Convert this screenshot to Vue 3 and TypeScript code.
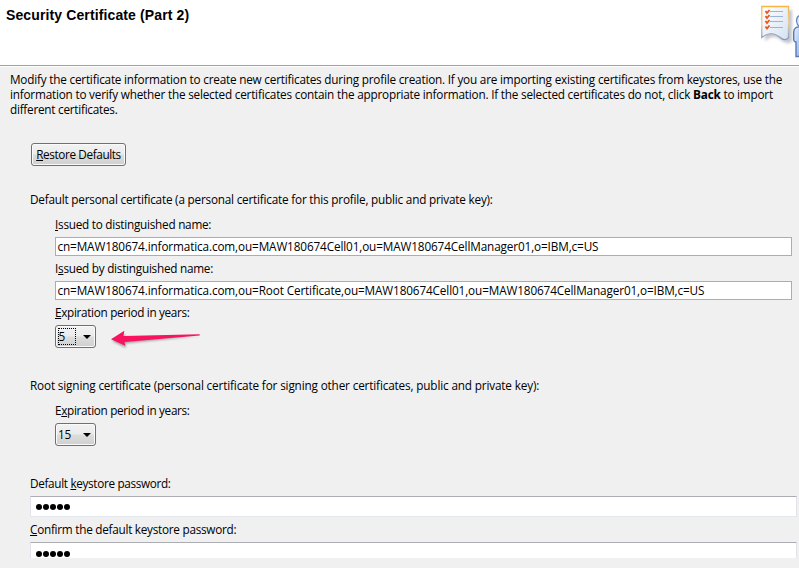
<script setup lang="ts">
import { ref } from 'vue'

interface CertificateName {
  before: string
  key: string
  after: string
  value: string
  size: string
}

const names: CertificateName[] = [
  {
    before: '',
    key: 'I',
    after: 'ssued to distinguished name:',
    value: 'cn=MAW180674.informatica.com,ou=MAW180674Cell01,ou=MAW180674CellManager01,o=IBM,c=US',
    size: 'to',
  },
  {
    before: 'I',
    key: 's',
    after: 'sued by distinguished name:',
    value: 'cn=MAW180674.informatica.com,ou=Root Certificate,ou=MAW180674Cell01,ou=MAW180674CellManager01,o=IBM,c=US',
    size: 'by',
  },
]
const personalYears = ref(5)
const rootYears = ref(15)
const passwordLength = 5
</script>

<template>
  <main class="wizard">
    <header class="banner">
      <h1>Security Certificate (Part 2)</h1>
      <svg class="art" width="60" height="65" viewBox="0 0 60 65">
        <defs>
          <linearGradient id="paper" x1="0" y1="0" x2="1" y2="1">
            <stop offset="0" stop-color="#ffffff" />
            <stop offset="1" stop-color="#d5e2f2" />
          </linearGradient>
          <linearGradient id="edge" x1="0" y1="0" x2="0" y2="1">
            <stop offset="0" stop-color="#f5b645" />
            <stop offset=".5" stop-color="#e8cf9f" />
            <stop offset="1" stop-color="#7d9cc9" />
          </linearGradient>
          <linearGradient id="person" x1="0" y1="0" x2="1" y2="1">
            <stop offset="0" stop-color="#e9f3ff" />
            <stop offset="1" stop-color="#86b2e6" />
          </linearGradient>
          <filter id="soft" x="-30%" y="-30%" width="160%" height="160%">
            <feGaussianBlur stdDeviation="1.8" />
          </filter>
        </defs>
        <path d="M26 10H53V42Q47 45 42 40Q35 33 26 41Z" fill="#8c8c94" opacity=".5" filter="url(#soft)" />
        <path d="M22.8 6.5H49.5V37.5Q46 42 40.5 37Q32 30 22.8 37.5Z" fill="url(#paper)" stroke="url(#edge)" stroke-width="1.3" />
        <g stroke="#9bb4d6" stroke-width="1">
          <path d="M31 11.5H44M31 16.5H44M31 21.5H44M31 27.5H44" />
        </g>
        <g fill="none" stroke="#e8571d" stroke-width="1.8">
          <path d="M26.500 11L28 13L30.500 10M26.500 16L28 18L30.500 15M26.500 21L28 23L30.500 20M26.500 26.500L28 28.500L30.500 25.500" />
        </g>
        <path d="M62 27Q55 26 54.700 32V40Q55 42 57 42V56.500H62Z" fill="url(#person)" stroke="#5879b4" stroke-width="1.4" />
        <path d="M62 15Q57.500 16 57.500 21Q58 26 62 27Z" fill="#dcecff" stroke="#6685bb" stroke-width="1.3" />
      </svg>
    </header>

    <section class="body">
      <p class="intro">
        <span class="i1">Modify the certificate information to create new certificates during profile creation. If you are importing existing certificates from keystores, use the</span>
        <span class="i2">information to verify whether the selected certificates contain the appropriate information. If the selected certificates do not, click <b>Back</b> to import</span>
        <span class="i3">different certificates.</span>
      </p>

      <button class="restore" type="button"><span><u>R</u>estore Defaults</span></button>

      <div class="group personal">
        <h2 class="t-personal">Default personal certificate (a personal certificate for this profile, public and private key):</h2>
        <div class="fields">
          <template v-for="n in names" :key="n.size">
            <label :class="'l-' + n.size">{{ n.before }}<u>{{ n.key }}</u>{{ n.after }}</label>
            <div class="input"><span :class="'v-' + n.size">{{ n.value }}</span></div>
          </template>
          <label class="l-exp"><u>E</u>xpiration period in years:</label>
          <div class="choice">
            <div class="combo focused">
              <span class="num">{{ personalYears }}</span>
              <svg class="caret" width="8" height="4" viewBox="0 0 8 4"><path d="M0 0H8L4 4Z" /></svg>
            </div>
            <svg class="arrow" width="100" height="28" viewBox="0 0 100 28">
              <path class="shade" d="M5 16L18 9L17.500 13.500L93 11L18.500 18.500L19 23Z" />
              <path class="pointer" d="M4 14.200L17.300 5.700L16.500 11L92.700 9.300V10.600L17.500 17L18.300 20.700Z" />
            </svg>
          </div>
        </div>
      </div>

      <div class="group root">
        <h2 class="t-root">Root signing certificate (personal certificate for signing other certificates, public and private key):</h2>
        <div class="fields">
          <label class="l-exp">E<u>x</u>piration period in years:</label>
          <div class="combo">
            <span class="num">{{ rootYears }}</span>
            <svg class="caret" width="8" height="4" viewBox="0 0 8 4"><path d="M0 0H8L4 4Z" /></svg>
          </div>
        </div>
      </div>

      <div class="group keystore">
        <label class="l-key">Default <u>k</u>eystore password:</label>
        <div class="password"><i v-for="d in passwordLength" :key="d"></i></div>
        <label class="l-conf"><u>C</u>onfirm the default keystore password:</label>
        <div class="password cut"><i v-for="d in passwordLength" :key="d"></i></div>
      </div>
    </section>
  </main>
</template>

<style>
body { margin: 0; background: #f0f0f0; }
</style>

<style scoped>
* { box-sizing: border-box; }
.wizard {
  width: 799px; height: 568px; overflow: hidden; background: #f0f0f0; color: #000;
  font: 11.75px/15px "Open Sans", "Noto Sans", sans-serif; white-space: nowrap;
}
.banner {
  display: flex; justify-content: space-between; height: 67px; background: #fff;
  border-bottom: 1px solid #fff; box-shadow: inset 0 -1px #a0a0a0;
}
h1 { margin: 7px 0 0 6px; font: bold 14px/16px "Liberation Sans", Arial, sans-serif; letter-spacing: .12px; }
.art { display: block; }
.body { display: flex; flex-direction: column; align-items: flex-start; padding-top: 5px; }
.intro { margin: 0 0 0 10px; }
.intro span { display: block; width: max-content; }
.i1 { letter-spacing: -.205px; }
.i2 { letter-spacing: -.205px; }
.i3 { letter-spacing: -.25px; }
.t-personal { letter-spacing: -.207px; }
.t-root { letter-spacing: -.153px; }
.l-to { letter-spacing: -.25px; }
.l-by { letter-spacing: -.25px; }
.l-exp { letter-spacing: -.32px; }
.v-to, .v-by { letter-spacing: -.127px; }
.l-key { letter-spacing: -.33px; }
.l-conf { letter-spacing: -.26px; }
u { text-decoration: underline; text-underline-offset: 1px; text-decoration-thickness: 1px; text-decoration-skip-ink: none; }
.restore {
  width: 95px; height: 23px; margin: 26px 0 0 31px; padding: 0; border: 1px solid #707070; border-radius: 3px;
  background: linear-gradient(#f2f2f2, #ebebeb 48%, #dddddd 52%, #cfcfcf); box-shadow: inset 0 0 0 1px #fafafa;
  color: #000; font: inherit; letter-spacing: -.38px;
}
.group { display: flex; flex-direction: column; }
.group > * { width: max-content; }
h2 { margin: 0 0 10px 30px; font: inherit; }
.personal { margin-top: 26px; }
.root, .keystore { margin-top: 30px; }
.fields { display: flex; flex-direction: column; align-items: flex-start; gap: 5px; margin-left: 55px; }
.input { width: 737px; height: 19px; padding: 1px 0 0 1.5px; border: 1px solid #abadb3; background: #fff; }
.choice { display: flex; height: 23px; }
.combo {
  display: flex; align-items: center; justify-content: space-between; width: 41px; height: 23px; padding: 0 4px 0 2px;
  border: 1px solid #707070; border-radius: 3px;
  background: linear-gradient(#f2f2f2, #ebebeb 48%, #dddddd 52%, #cfcfcf); box-shadow: inset 0 0 0 1px #fafafa;
}
.num { width: 18px; height: 17px; line-height: 17px; letter-spacing: -.3px; }
.focused .num { border: 1px dotted #000; line-height: 15px; text-indent: -.5px; }
.caret { flex: none; fill: #000; }
.arrow { margin: 0 0 0 11px; }
.pointer { fill: #f8125f; }
.shade { fill: #555; opacity: .5; filter: blur(1px); }
.keystore { gap: 5px; margin-left: 30px; }
.group > .password {
  display: flex; align-items: center; gap: 1px; width: 767px; height: 21px; padding: 1px 0 0 5px;
  border: 1px solid #e2e3ea; border-top-color: #abadb3; border-bottom-color: #e3e9ef; background: #fff;
}
.password i { width: 6px; height: 6px; border-radius: 50%; background: #000; }
.group > .cut { height: 16px; border-bottom: 0; padding-top: 6px; }
</style>
